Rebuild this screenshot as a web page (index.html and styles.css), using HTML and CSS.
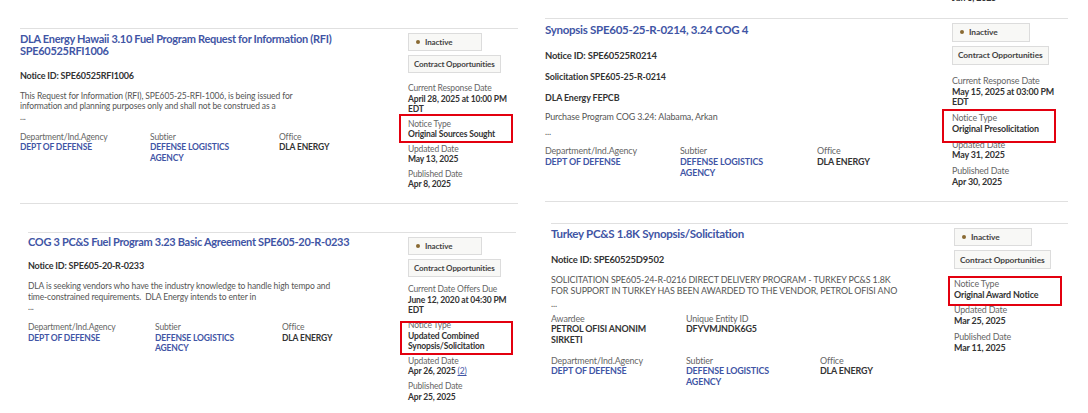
FILE: index.html
```html
<!DOCTYPE html>
<html lang="en">
<head>
<meta charset="utf-8">
<title>Contract Opportunities</title>
<link rel="stylesheet" href="styles.css">
</head>
<body>
<div class="sheet">
  <div class="col">
    <section class="card card-a">
      <div class="main">
        <a class="title" href="#">DLA Energy Hawaii 3.10 Fuel Program Request for Information (RFI) SPE60525RFI1006</a>
        <p class="nid">Notice ID: SPE60525RFI1006</p>
        <div class="desc">
          <p>This Request for Information (RFI), SPE605-25-RFI-1006, is being issued for<br>information and planning purposes only and shall not be construed as a</p>
          <p class="more">...</p>
        </div>
        <div class="orgs">
          <div class="field"><div class="lbl">Department/Ind.Agency</div><div class="val link">DEPT OF DEFENSE</div></div>
          <div class="field"><div class="lbl">Subtier</div><div class="val link">DEFENSE LOGISTICS AGENCY</div></div>
          <div class="field"><div class="lbl">Office</div><div class="val">DLA ENERGY</div></div>
        </div>
      </div>
      <aside class="side">
        <span class="badge status"><i class="dot"></i>Inactive</span>
        <span class="badge">Contract Opportunities</span>
        <div class="field"><div class="lbl">Current Response Date</div><div class="val">April 28, 2025 at 10:00 PM EDT</div></div>
        <div class="field mark"><div class="lbl">Notice Type</div><div class="val">Original Sources Sought</div></div>
        <div class="field"><div class="lbl">Updated Date</div><div class="val">May 13, 2025</div></div>
        <div class="field"><div class="lbl">Published Date</div><div class="val">Apr 8, 2025</div></div>
      </aside>
    </section>

    <section class="card card-c">
      <div class="main">
        <a class="title" href="#">COG 3 PC&amp;S Fuel Program 3.23 Basic Agreement SPE605-20-R-0233</a>
        <p class="nid">Notice ID: SPE605-20-R-0233</p>
        <div class="desc">
          <p>DLA is seeking vendors who have the industry knowledge to handle high tempo and<br>time-constrained requirements.&nbsp; DLA Energy intends to enter in</p>
          <p class="more">...</p>
        </div>
        <div class="orgs">
          <div class="field"><div class="lbl">Department/Ind.Agency</div><div class="val link">DEPT OF DEFENSE</div></div>
          <div class="field"><div class="lbl">Subtier</div><div class="val link">DEFENSE LOGISTICS AGENCY</div></div>
          <div class="field"><div class="lbl">Office</div><div class="val">DLA ENERGY</div></div>
        </div>
      </div>
      <aside class="side">
        <span class="badge status"><i class="dot"></i>Inactive</span>
        <span class="badge">Contract Opportunities</span>
        <div class="field"><div class="lbl">Current Date Offers Due</div><div class="val">June 12, 2020 at 04:30 PM EDT</div></div>
        <div class="field mark"><div class="lbl">Notice Type</div><div class="val">Updated Combined Synopsis/Solicitation</div></div>
        <div class="field"><div class="lbl">Updated Date</div><div class="val">Apr 26, 2025 <a class="count" href="#">(2)</a></div></div>
        <div class="field"><div class="lbl">Published Date</div><div class="val">Apr 25, 2025</div></div>
      </aside>
    </section>
  </div>

  <div class="col right">
    <div class="prev"><span class="val">Jun 3, 2025</span></div>
    <section class="card card-b">
      <div class="main">
        <a class="title" href="#">Synopsis SPE605-25-R-0214, 3.24 COG 4</a>
        <p class="nid">Notice ID: SPE60525R0214</p>
        <div class="desc">
          <p class="strong">Solicitation SPE605-25-R-0214</p>
          <p class="strong">DLA Energy FEPCB</p>
          <p>Purchase Program COG 3.24: Alabama, Arkan</p>
          <p class="more">...</p>
        </div>
        <div class="orgs">
          <div class="field"><div class="lbl">Department/Ind.Agency</div><div class="val link">DEPT OF DEFENSE</div></div>
          <div class="field"><div class="lbl">Subtier</div><div class="val link">DEFENSE LOGISTICS AGENCY</div></div>
          <div class="field"><div class="lbl">Office</div><div class="val">DLA ENERGY</div></div>
        </div>
      </div>
      <aside class="side">
        <span class="badge status"><i class="dot"></i>Inactive</span>
        <span class="badge">Contract Opportunities</span>
        <div class="field"><div class="lbl">Current Response Date</div><div class="val">May 15, 2025 at 03:00 PM EDT</div></div>
        <div class="field mark"><div class="lbl">Notice Type</div><div class="val">Original Presolicitation</div></div>
        <div class="field"><div class="lbl">Updated Date</div><div class="val">May 31, 2025</div></div>
        <div class="field"><div class="lbl">Published Date</div><div class="val">Apr 30, 2025</div></div>
      </aside>
    </section>

    <section class="card card-d">
      <div class="main">
        <a class="title" href="#">Turkey PC&amp;S 1.8K Synopsis/Solicitation</a>
        <p class="nid">Notice ID: SPE60525D9502</p>
        <div class="desc">
          <p>SOLICITATION SPE605-24-R-0216 DIRECT DELIVERY PROGRAM - TURKEY PC&amp;S 1.8K<br>FOR SUPPORT IN TURKEY HAS BEEN AWARDED TO THE VENDOR, PETROL OFISI ANO</p>
          <p class="more">...</p>
        </div>
        <div class="orgs award">
          <div class="field"><div class="lbl">Awardee</div><div class="val">PETROL OFISI ANONIM SIRKETI</div></div>
          <div class="field uei"><div class="lbl">Unique Entity ID</div><div class="val">DFYVMJNDK6G5</div></div>
        </div>
        <div class="orgs">
          <div class="field"><div class="lbl">Department/Ind.Agency</div><div class="val link">DEPT OF DEFENSE</div></div>
          <div class="field"><div class="lbl">Subtier</div><div class="val link">DEFENSE LOGISTICS AGENCY</div></div>
          <div class="field"><div class="lbl">Office</div><div class="val">DLA ENERGY</div></div>
        </div>
      </div>
      <aside class="side">
        <span class="badge status"><i class="dot"></i>Inactive</span>
        <span class="badge">Contract Opportunities</span>
        <div class="field mark"><div class="lbl">Notice Type</div><div class="val">Original Award Notice</div></div>
        <div class="field"><div class="lbl">Updated Date</div><div class="val">Mar 25, 2025</div></div>
        <div class="field"><div class="lbl">Published Date</div><div class="val">Mar 11, 2025</div></div>
      </aside>
    </section>
  </div>
</div>
</body>
</html>
```

FILE: styles.css
```css
* { box-sizing: border-box; margin: 0; padding: 0; }

html, body {
  margin: 0;
  background: #ffffff;
}

body {
  width: 1088px;
  height: 413px;
  overflow: hidden;
  font-family: Lato, "Liberation Sans", Arial, sans-serif;
  color: #333333;
}

.sheet {
  display: grid;
  grid-template-columns: 540px 548px;
  height: 413px;
}

.col {
  --k: 1;
  --lh: 10.5px;
  --gap: 4px;
  display: flex;
  flex-direction: column;
  align-items: flex-start;
  overflow: hidden;
}

.col.right {
  --k: 1.05;
  --lh: 10.75px;
  --gap: 5px;
}

/* ---------- card ---------- */
.card {
  display: grid;
  border-top: 1px solid #e0e0e0;
  padding-top: 4px;
  --bx-l: -9px;
  --bx-t: -4.75px;
  --bx-b: -3.75px;
  --bx-w: 110px;
  --after-badges: 10px;
}

.card-a {
  margin: 28px 0 0 20px;
  width: 498px;
  grid-template-columns: 388px 1fr;
  border-bottom: 1px solid #e0e0e0;
  padding-bottom: 13px;
}

.card-c {
  margin: 28px 0 0 28px;
  width: 488px;
  grid-template-columns: 380px 1fr;
  --bx-l: -8px;
  --bx-t: 1.25px;
  --bx-b: -3.75px;
  --bx-w: 109px;
  --after-badges: 7.75px;
  --gap: 4.25px;
}

.card-b {
  margin: 0 0 0 5px;
  width: 523px;
  grid-template-columns: 407px 1fr;
  border-bottom: 1px solid #e0e0e0;
  padding-bottom: 13px;
  --bx-l: -10px;
  --bx-t: -3.6px;
  --bx-b: -8.6px;
  --after-badges: 11px;
}

.card-d {
  margin: 21px 0 0 11px;
  width: 517px;
  grid-template-columns: 403px 1fr;
  --bx-l: -6px;
  --bx-t: -2.6px;
  --bx-b: -5.6px;
  --after-badges: 9.6px;
}

.prev {
  margin: -7px 0 0 412px;
  height: 25px;
  line-height: var(--lh);
}

.prev .val {
  display: block;
}

/* ---------- main column ---------- */
.card-b .main { padding-top: 1px; }
.card-c .main { margin-top: -1px; }

.title {
  display: block;
  max-width: 345px;
  font-size: calc(11px * var(--k));
  letter-spacing: -0.3px;
  line-height: 12px;
  font-weight: 700;
  color: #3f55a5;
  text-decoration: none;
}

.nid {
  margin-top: 12.5px;
  font-size: calc(9px * var(--k));
  letter-spacing: -0.2px;
  line-height: 11px;
  font-weight: 700;
  color: #333333;
}

.card-b .nid { margin-top: 13.5px; }
.card-d .nid { margin-top: 14.5px; }

.desc {
  margin-top: 10px;
  font-size: calc(8.5px * var(--k));
  letter-spacing: -0.12px;
  line-height: var(--lh);
  color: #555555;
  white-space: nowrap;
}

.card-b .desc { margin-top: 11px; }

.desc .strong {
  font-weight: 700;
  color: #333333;
  margin-bottom: 10.25px;
}

.desc .strong + .strong {
  margin-bottom: 8.25px;
}

.card-b .desc .more { margin-top: 4.25px; }
.card-d .desc .more { margin-top: 2.25px; }

.orgs {
  display: grid;
  grid-template-columns: 130px 129px 1fr;
  margin-top: 9.5px;
}

.card-c .orgs { grid-template-columns: 127px 127px 1fr; }
.card-b .orgs { grid-template-columns: 135px 137px 1fr; margin-top: 9.2px; }
.card-d .orgs { grid-template-columns: 135px 134px 1fr; margin-top: 9.6px; }
.card-d .orgs.award { margin-top: 4.2px; }

.orgs .field {
  max-width: calc(112px * var(--k));
}

/* ---------- labels / values ---------- */
.lbl {
  font-size: calc(8.5px * var(--k));
  letter-spacing: -0.15px;
  line-height: var(--lh);
  color: #666666;
}

.val {
  font-size: calc(8.5px * var(--k));
  letter-spacing: -0.15px;
  line-height: var(--lh);
  font-weight: 700;
  color: #333333;
}

.val.link {
  color: #3f55a5;
}

.count {
  font-weight: 400;
  color: #3f55a5;
  text-decoration: underline;
}

/* ---------- side column ---------- */
.side {
  display: flex;
  flex-direction: column;
  align-items: flex-start;
}

.badge {
  display: flex;
  align-items: center;
  height: calc(18px * var(--k));
  padding: 0 5px;
  border: 1px solid #dcdcdc;
  background: #f8f8f6;
  font-size: calc(8px * var(--k));
  letter-spacing: -0.1px;
  font-weight: 700;
  color: #444444;
  white-space: nowrap;
}

.badge + .badge {
  margin-top: 4px;
}

.status {
  width: calc(74px * var(--k));
}

.dot {
  display: block;
  width: 4px;
  height: 4px;
  border-radius: 50%;
  background: #8a6a32;
  margin: 0 5px 0 2px;
}

.side .field {
  width: calc(106px * var(--k));
  margin-top: var(--gap);
}

.side .badge + .field {
  margin-top: var(--after-badges);
}

/* annotation box */
.mark {
  position: relative;
}

.mark::after {
  content: "";
  position: absolute;
  left: var(--bx-l);
  top: var(--bx-t);
  bottom: var(--bx-b);
  width: var(--bx-w);
  border: 2px solid #e3000f;
}
```
